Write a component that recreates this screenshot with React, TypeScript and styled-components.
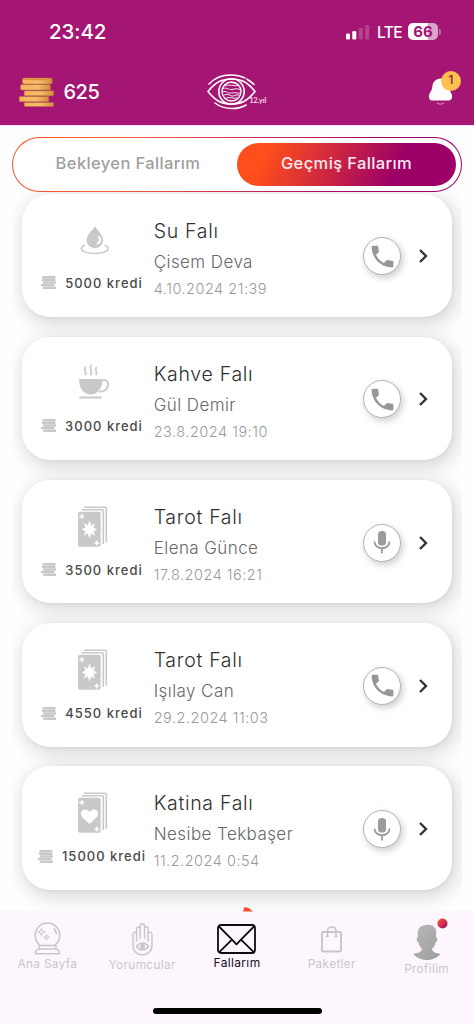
import React from "react";
import styled, { createGlobalStyle } from "styled-components";

const GlobalStyle = createGlobalStyle`
  * { box-sizing: border-box; }
  body { margin: 0; background: #fff; font-family: Inter, "Liberation Sans", sans-serif; }
  svg { display: block; flex: none; overflow: visible; }
`;

const Screen = styled.div`
  width: 474px;
  height: 1024px;
  display: flex;
  flex-direction: column;
  overflow: hidden;
  background: #fefefe;
`;

const Header = styled.header`
  height: 125px;
  flex: none;
  background: #a51573;
  color: #fff;
`;

const StatusBar = styled.div`
  height: 62px;
  padding: 1px 33px 0 49px;
  display: flex;
  align-items: center;
`;

const Clock = styled.span`
  flex: 1;
  font-size: 20.5px;
  font-weight: 500;
  letter-spacing: -0.1px;
`;

const Network = styled.span`
  margin: 0 7px 0 7px;
  width: 24px;
  font-size: 15.5px;
  font-weight: 500;
  letter-spacing: -0.6px;
  padding-top: 1px;
`;

const Battery = styled.div`
  width: 30px;
  height: 17px;
  border-radius: 5px;
  background: linear-gradient(90deg, #fff 66%, #dca3c9 66%);
  color: #a51573;
  font-size: 15px;
  line-height: 17px;
  font-weight: 700;
  text-align: center;
`;

const BatteryTip = styled.span`
  width: 2px;
  height: 6px;
  margin-left: 1px;
  border-radius: 0 2px 2px 0;
  background: #c76aa8;
`;

const HeaderRow = styled.div`
  height: 63px;
  padding: 0 14px 3px 19px;
  display: grid;
  grid-template-columns: 188px 1fr auto;
  align-items: center;
`;

const Balance = styled.div`
  display: flex;
  align-items: center;
  gap: 9.5px;
  font-size: 20px;
  font-weight: 500;
  letter-spacing: -0.5px;
`;

const BellWrap = styled.div`
  position: relative;
  width: 33px;
  height: 36px;
  margin: -6px 0 0;
  left: 1px;
`;

const BellBadge = styled.span`
  position: absolute;
  top: 0;
  right: 0;
  width: 20px;
  height: 20px;
  border-radius: 50%;
  background: #ffc04d;
  color: #7b1746;
  font-size: 11.5px;
  line-height: 19px;
  font-weight: 500;
  text-align: center;
`;

const Content = styled.main`
  height: 786px;
  flex: none;
  padding: 11px 12px 0;
  border-top: 1px solid #fbe2fb;
  overflow: hidden;
`;

const Tabs = styled.div`
  height: 54.5px;
  padding: 5px 5px 5px 12px;
  border: 1px solid transparent;
  border-radius: 28px;
  background: linear-gradient(#fff, #fff) padding-box,
    linear-gradient(110deg, #ff4e1d 0%, #f0603d 25%, #a4006b 78%, #9b0068 100%) border-box;
  display: flex;
`;

const Tab = styled.button<{ $active?: boolean }>`
  border: 0;
  padding: 0 ${(p) => (p.$active ? 0 : 6)}px 4px 0;
  width: ${(p) => (p.$active ? 219 : 212)}px;
  height: 43px;
  border-radius: 22px;
  background: ${(p) =>
    p.$active ? "linear-gradient(115deg, #ff4e1b 14%, #9c0066 72%)" : "none"};
  color: ${(p) => (p.$active ? "#fbe9f1" : "#a0a0a0")};
  font: ${(p) => (p.$active ? 450 : 450)} 16.5px Inter, sans-serif;
  letter-spacing: 0.38px;
  white-space: nowrap;
`;

const List = styled.div`
  height: 719.5px;
  padding: 2px 10px 0;
  display: flex;
  flex-direction: column;
  gap: 19.7px;
  overflow: hidden;
`;

const Card = styled.article`
  height: 123.5px;
  flex: none;
  border-radius: 28px;
  background: #fff;
  box-shadow: 3px 5px 18px 3px rgba(0, 0, 0, 0.14), 1px 1px 4px rgba(0, 0, 0, 0.05);
  display: flex;
`;

const Kind = styled.div`
  width: 132px;
  padding: 26px 0 0 8px;
  display: flex;
  flex-direction: column;
  align-items: center;
`;

const Credit = styled.div`
  margin-top: 11px;
  height: 20px;
  display: flex;
  align-items: center;
  gap: 8px;
  color: #4a4a4a;
  font-size: 13px;
  font-weight: 450;
  letter-spacing: 1px;
  white-space: nowrap;

  ${Card}:nth-child(n + 3) & {
    margin-top: 12px;
  }
`;

const Details = styled.div`
  flex: 1;
  padding-top: 23px;
  margin-left: -0.3px;
  white-space: nowrap;
`;

const Title = styled.div`
  height: 28px;
  line-height: 28px;
  font-size: 19.5px;
  font-weight: 350;
  letter-spacing: 0.7px;
  color: #303030;
`;

const Reader = styled.div`
  margin-top: 3px;
  height: 28px;
  line-height: 28px;
  font-size: 17px;
  font-weight: 350;
  letter-spacing: 0.42px;
  color: #686868;
`;

const When = styled.div`
  height: 26px;
  line-height: 26px;
  font-size: 14.5px;
  font-weight: 350;
  letter-spacing: 0.5px;
  color: #999;
`;

const Actions = styled.div`
  display: flex;
  align-items: center;
  gap: 18px;
  padding: 2px 24px 0 0;
`;

const RoundButton = styled.button`
  width: 38px;
  height: 38px;
  padding: 0;
  border: 1px solid #b4b4b4;
  border-radius: 50%;
  background: #fff;
  box-shadow: 2px 3px 7px rgba(0, 0, 0, 0.2);
  display: grid;
  place-items: center;
`;

const Nav = styled.nav`
  position: relative;
  height: 113px;
  flex: none;
  background: #fdf6fe;
  display: grid;
  grid-template-columns: repeat(5, 1fr);
  grid-template-rows: 97px 6px;
`;

const NavItem = styled.div<{ $active?: boolean; $top: number; $gap: number }>`
  padding-top: ${(p) => p.$top}px;
  display: flex;
  flex-direction: column;
  align-items: center;
  color: ${(p) => (p.$active ? "#16101a" : "#cbc5cd")};
  font-size: ${(p) => (p.$active ? 12 : 11.8)}px;
  letter-spacing: ${(p) => (p.$active ? 0.35 : 0.35)}px;
  line-height: 16px;
  white-space: nowrap;
  & > svg { margin-bottom: ${(p) => p.$gap}px; }
`;

const HomeIndicator = styled.div`
  grid-column: 1 / -1;
  justify-self: center;
  width: 169px;
  height: 6px;
  border-radius: 3px;
  background: #000;
`;

const Spark = styled.svg`
  position: absolute;
  left: 243px;
  top: -4px;
`;

const GoldCoins = () => (
  <svg width="35" height="30" viewBox="0 0 35 30">
    <defs>
      <linearGradient id="gold" x1="0" x2="1">
        <stop offset="0" stopColor="#f5b558" />
        <stop offset=".55" stopColor="#f3bd6b" />
        <stop offset="1" stopColor="#d58d3a" />
      </linearGradient>
    </defs>
    <g fill="url(#gold)" stroke="#bb6b3e" strokeWidth=".5">
      <rect x="5.200" y="25.500" width="29.500" height="4" rx="1" />
      <rect x=".3" y="19.500" width="29.500" height="5.200" rx="1" />
      <rect x="5.200" y="13.800" width="29.500" height="5" rx="1" />
      <rect x="1.500" y="7.500" width="30" height="5.500" rx="1.500" />
      <rect x="3.300" y="1" width="30" height="6" rx="2" />
    </g>
    <path d="M3.500 2.500C5 .8 31 .8 33 2.500C30 3.600 7 3.600 3.500 2.500Z" fill="#dc9140" />
  </svg>
);

const EyeLogo = () => (
  <svg width="62" height="36" viewBox="0 0 62 36" fill="none" stroke="#fff" strokeWidth="1.600" strokeLinecap="round">
    <path d="M1 17.500C9 7.500 15 5 24.500 5S40 7.500 48 17.500C40 27.500 34 30 24.500 30S9 27.500 1 17.500Z" />
    <path d="M2 10C8 3.500 15 1 23.500 1 29 1 34 2 38 4M40 5.200C43 6.800 45 8.500 47 10.500" />
    <path d="M8 29C13 33 18 34.500 25 34.500 31.500 34.500 35 33.500 39 31" />
    <circle cx="24.500" cy="17.500" r="12.700" />
    <circle cx="24.500" cy="17.500" r="9.500" strokeWidth="1.300" />
    <path d="M18 11.500c5-1.500 8 1 13 0M16 14.500c5-1.500 5 1.500 9 1s4-1.500 8 0M15.500 18c5-2 4 2 9 1s5 1 9 0M17 21c5-2 6 1.500 9 1s3-1.500 6-1M19 24c3-1.500 7 1 11 0M24 8.500l5 1" strokeWidth=".9" />
    <text x="42.500" y="29" fill="#f6dcec" stroke="none" fontFamily="Lato, Inter, sans-serif" fontSize="7" fontWeight="700">12.yıl</text>
  </svg>
);

const Bell = () => (
  <svg width="33" height="36" viewBox="0 0 33 36">
    <path d="M13 7.500C7 7.500 4.500 12 4.300 16C4 20 1.700 21 1 24.500C.5 28 2 29.500 4.500 29.500H20C23 29.500 24.500 28 24 24.500C23.300 21 21.200 20 21 16C20.800 12 18.500 7.500 13 7.500Z" fill="#fff" />
    <path d="M9 31.700c1.500 2 5.500 2 7 0" fill="none" stroke="#cf83b4" strokeWidth="1.300" />
  </svg>
);

const Signal = () => (
  <svg width="24" height="16" viewBox="0 0 24 16" fill="#fff">
    <rect x="0" y="9.500" width="4" height="6" rx="1.200" />
    <rect x="6.300" y="7" width="4" height="8.500" rx="1.200" />
    <rect x="12.800" y="4" width="4" height="11.500" rx="1.200" opacity=".2" />
    <rect x="19.200" y="1" width="4" height="14.500" rx="1.200" opacity=".2" />
  </svg>
);

const SmallCoins = () => (
  <svg width="16" height="13" viewBox="0 0 16 13" fill="#c9c9c9">
    <rect x="1.500" y="0" width="13" height="2.500" rx=".6" />
    <rect x="1" y="2.600" width="13.500" height="2.500" rx=".6" />
    <rect x="2" y="5.200" width="13" height="2.500" rx=".6" />
    <rect x="0" y="7.800" width="13.500" height="2.500" rx=".6" />
    <rect x="2" y="10.400" width="13" height="2.500" rx=".6" />
  </svg>
);

const Water = () => (
  <svg width="34" height="42" viewBox="0 0 34 42">
    <path d="M20 6C17.500 10.500 11.500 15 11.500 20a8.300 8.300 0 0 0 16.600 0C28.100 15 22.500 10.500 20 6Z" fill="#c9c9c9" />
    <path d="M24.200 17c1.500 3 .6 5.400-1.500 6.500" fill="none" stroke="#fff" strokeWidth="2" strokeLinecap="round" />
    <path d="M9.800 25C7.500 26 6.200 27 6.200 28.500c0 3 6 5 13.500 5s13.500-2 13.500-5c0-1.500-1.200-2.600-3.500-3.600" fill="none" stroke="#c9c9c9" strokeWidth="1.400" />
  </svg>
);

const Cup = () => (
  <svg width="34" height="42" viewBox="0 0 34 42">
    <path d="M4 16H27.500C27.500 25 23 31.500 15.700 31.500S4 25 4 16Z" fill="#c9c9c9" />
    <path d="M26 18c5-2.300 7.800 0 7 4.500-.8 4.200-4.500 6.300-8.800 6" fill="none" stroke="#c9c9c9" strokeWidth="1.800" />
    <path d="M5.200 34.500H25.800" stroke="#c9c9c9" strokeWidth="2.200" strokeLinecap="round" />
    <path d="M10.300 4.500c-2.500 2.500 2 4 0 7M16 2.500c-2.700 3 2 5 0 9M21.200 4.500c-2.500 2.500 2 4 0 7" fill="none" stroke="#c9c9c9" strokeWidth="1.700" strokeLinecap="round" />
  </svg>
);

const Deck = ({ heart }: { heart?: boolean }) => (
  <svg width="34" height="42" viewBox="0 0 34 42">
    <g fill="none" stroke="#c9c9c9" strokeWidth="1.600">
      <path d="M9 1.200H30Q31.300 1.200 31.300 2.500V36.500" />
      <path d="M7 3.700H27Q28.300 3.700 28.300 5V38" />
    </g>
    <rect x="3" y="5.700" width="22.700" height="35" rx="2" fill="#c9c9c9" />
    <path d="M6.800 8v5M4.300 10.500h5M21.800 34.500v5M19.300 37h5" stroke="#fff" strokeWidth="1.400" />
    {heart ? (
      <path d="M14.500 32 7.500 25.500C2.500 19 10.500 14.500 14.500 20C18.500 14.500 26.500 19 21.500 25.500Z" fill="#fff" />
    ) : (
      <path d="M14.500 14.500l1.800 5 3.900-2.300-1.700 4.300 3.700 2-3.700 2 1.700 4.300-3.900-2.300-1.800 5-1.800-5-3.900 2.300 1.700-4.300-3.700-2 3.700-2-1.700-4.300 3.900 2.300Z" fill="#fff" />
    )}
  </svg>
);

const Phone = () => (
  <svg width="29" height="29" viewBox="0 0 24 24" fill="#979797">
    <path d="M20 15.500c-1.250 0-2.450-.2-3.570-.57a1 1 0 0 0-1.020.24l-2.200 2.200a15.050 15.050 0 0 1-6.590-6.580l2.200-2.210a.96.960 0 0 0 .25-1A11.360 11.360 0 0 1 8.500 4a1 1 0 0 0-1-1H4a1 1 0 0 0-1 1c0 9.390 7.610 17 17 17a1 1 0 0 0 1-1v-3.500a1 1 0 0 0-1-1Z" />
  </svg>
);

const Mic = () => (
  <svg width="18" height="25" viewBox="0 0 18 25">
    <rect x="5" y="1" width="8" height="14.500" rx="3.500" fill="#9b9b9b" />
    <path d="M1.500 11.500c0 9 15 9 15 0M9 18v5.500" fill="none" stroke="#9b9b9b" strokeWidth="1.800" />
  </svg>
);

const Chevron = () => (
  <svg width="9" height="14" viewBox="0 0 9 14" fill="none" stroke="#343434" strokeWidth="2.400">
    <path d="M1 1l6 6-6 6" />
  </svg>
);

const CrystalBall = () => (
  <svg width="27" height="32" viewBox="0 0 27 32" fill="none" stroke="#c9c3cb" strokeWidth="1.500" strokeLinejoin="round">
    <path d="M6.500 22.500a12.300 12.300 0 1 1 14 0ZM5 22.500h17v3.500H5ZM4 26 1.500 28.500v2.300h24v-2.300L23 26" />
    <path d="M19.500 5.500c2 1.500 3 3.500 3 6" />
    <path d="M7.500 5.500l1 2.500 2.500 1-2.500 1-1 2.500-1-2.500-2.500-1 2.500-1ZM12.500 11.500l.7 2 2 .8-2 .8-.7 2-.7-2-2-.8 2-.8Z" strokeWidth="1" />
  </svg>
);

const Hand = () => (
  <svg width="21" height="33" viewBox="0 0 21 33" fill="none" stroke="#c9c3cb" strokeWidth="1.400" strokeLinecap="round">
    <path d="M4.500 18V6a1.800 1.800 0 0 1 3.600 0v10V3a2.200 2.200 0 0 1 4.400 0v13V5.500a1.800 1.800 0 0 1 3.600 0V18" />
    <path d="M4.500 10C2 8.500 1 9.500 1 12v10.500C1 28 5 32 10.300 32S20 28 20 22.500V12c0-2.500-1.300-3.500-3.900-2" />
    <path d="M4.500 23.500c3.500-4.600 8.500-4.600 12 0-3.500 4.600-8.500 4.600-12 0Z" />
    <circle cx="10.500" cy="23.500" r="1.800" fill="#c9c3cb" />
  </svg>
);

const Mail = () => (
  <svg width="39" height="30" viewBox="0 0 39 30" fill="none" stroke="#100b13" strokeWidth="1.800" strokeLinejoin="round">
    <rect x="1" y="1" width="37" height="28" rx="3" />
    <path d="M1.500 2 15.500 16.200 19.500 20.300 23.500 16.200 37.500 2M2 28.300 15 15.700M37 28.300 24 15.700" />
  </svg>
);

const Bag = () => (
  <svg width="21" height="27" viewBox="0 0 21 27" fill="none" stroke="#c9c3cb" strokeWidth="1.900">
    <rect x="1" y="6" width="19" height="19.500" rx="1" />
    <path d="M6.500 11V5c0-5.500 8.500-5.500 8.500 0v6M4.800 10.500h3M13.500 10.500h3" strokeWidth="1.500" />
  </svg>
);

const Profile = () => (
  <svg width="28" height="36" viewBox="0 0 28 36">
    <defs>
      <linearGradient id="shade" x1="0" y1="0" x2="1" y2="1">
        <stop offset="0" stopColor="#b8b8b8" />
        <stop offset="1" stopColor="#9d9d9d" />
      </linearGradient>
      <linearGradient id="dot" x1="0" y1="0" x2="1" y2="1">
        <stop offset="0.2" stopColor="#f0482f" />
        <stop offset="0.9" stopColor="#a2106d" />
      </linearGradient>
    </defs>
    <path d="M13 1C17 0 20 1.500 21.500 3.500C24 5 23 10 23 13C25 13 24.500 18 22.500 18.500C22 22 20.500 23 19 25C19.500 29 24 29 27.500 30C24 34 19 36 14 36S4 34 0 30C3.500 29 8.500 29 9 25C7.500 23 6 22 5.500 18.500C3.500 18 3 13 5 13C4 7 5 1.500 13 1Z" fill="url(#shade)" />
    <circle cx="29.500" cy="-.5" r="5" fill="url(#dot)" />
  </svg>
);

const readings = [
  { icon: <Water />, title: "Su Falı", reader: "Çisem Deva", when: "4.10.2024 21:39", credit: 5000, call: true },
  { icon: <Cup />, title: "Kahve Falı", reader: "Gül Demir", when: "23.8.2024 19:10", credit: 3000, call: true },
  { icon: <Deck />, title: "Tarot Falı", reader: "Elena Günce", when: "17.8.2024 16:21", credit: 3500, call: false },
  { icon: <Deck />, title: "Tarot Falı", reader: "Işılay Can", when: "29.2.2024 11:03", credit: 4550, call: true },
  { icon: <Deck heart />, title: "Katina Falı", reader: "Nesibe Tekbaşer", when: "11.2.2024 0:54", credit: 15000, call: false },
];

export default function App() {
  return (
    <Screen>
      <GlobalStyle />
      <Header>
        <StatusBar>
          <Clock>23:42</Clock>
          <Signal />
          <Network>LTE</Network>
          <Battery>66</Battery>
          <BatteryTip />
        </StatusBar>
        <HeaderRow>
          <Balance>
            <GoldCoins />
            625
          </Balance>
          <EyeLogo />
          <BellWrap>
            <Bell />
            <BellBadge>1</BellBadge>
          </BellWrap>
        </HeaderRow>
      </Header>
      <Content>
        <Tabs>
          <Tab>Bekleyen Fallarım</Tab>
          <Tab $active>Geçmiş Fallarım</Tab>
        </Tabs>
        <List>
          {readings.map((r) => (
            <Card key={r.when}>
              <Kind>
                {r.icon}
                <Credit>
                  <SmallCoins />
                  {r.credit} kredi
                </Credit>
              </Kind>
              <Details>
                <Title>{r.title}</Title>
                <Reader>{r.reader}</Reader>
                <When>{r.when}</When>
              </Details>
              <Actions>
                <RoundButton>{r.call ? <Phone /> : <Mic />}</RoundButton>
                <Chevron />
              </Actions>
            </Card>
          ))}
        </List>
      </Content>
      <Nav>
        <Spark width="10" height="5" viewBox="0 0 10 5">
          <path d="M0 4.500 1.500 0 5.500 1 10 4.500Z" fill="#ff4b2b" />
        </Spark>
        <NavItem $top={12} $gap={1}><CrystalBall />Ana Sayfa</NavItem>
        <NavItem $top={12} $gap={1}><Hand />Yorumcular</NavItem>
        <NavItem $active $top={13} $gap={1}><Mail />Fallarım</NavItem>
        <NavItem $top={15} $gap={3}><Bag />Paketler</NavItem>
        <NavItem $top={13} $gap={1}><Profile />Profilim</NavItem>
        <HomeIndicator />
      </Nav>
    </Screen>
  );
}
